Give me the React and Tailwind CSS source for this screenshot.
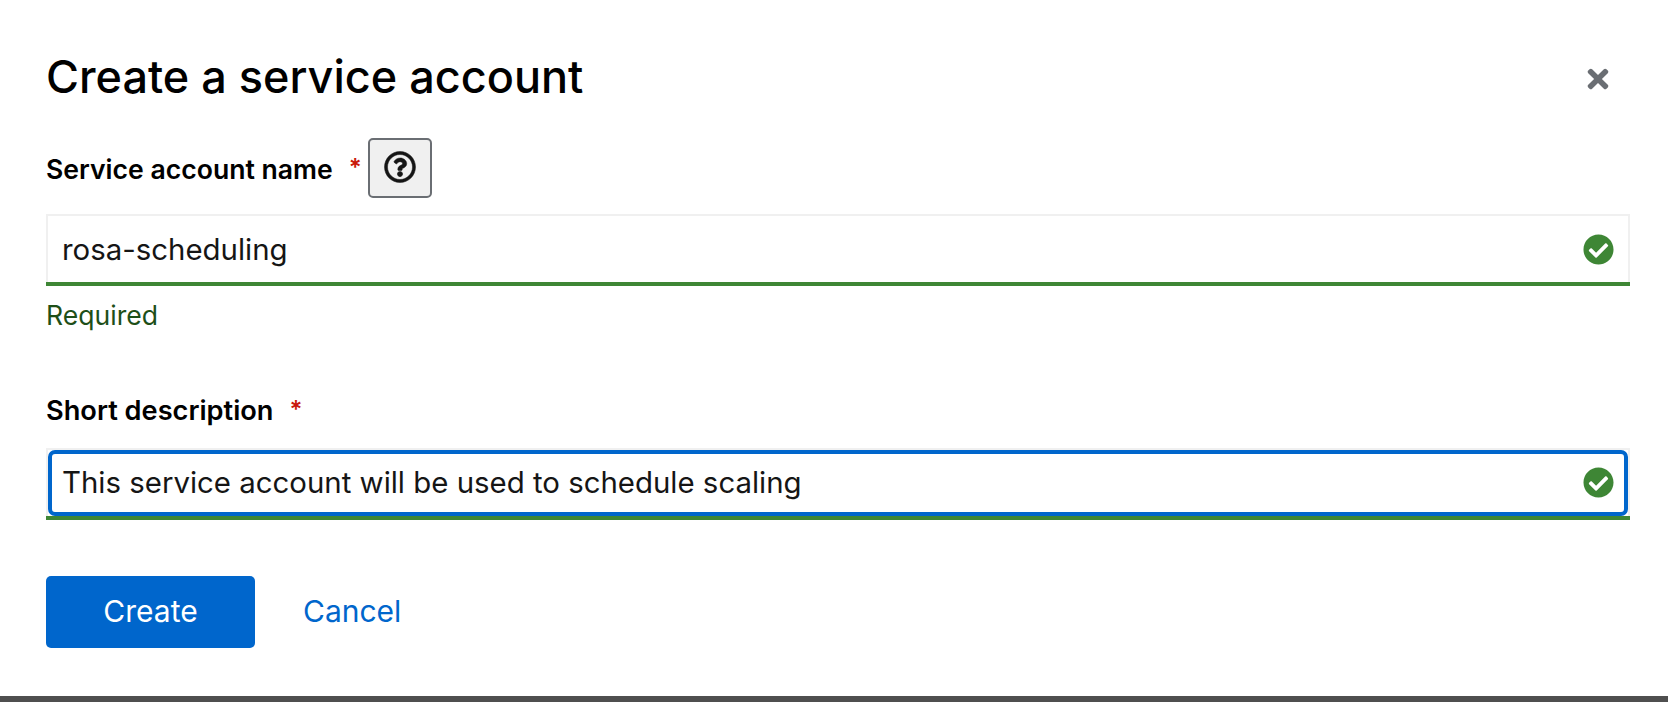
import React from "react";
import { FaCheckCircle, FaRegQuestionCircle, FaTimes } from "react-icons/fa";

function Field({ value, focused }) {
  return (
    <div className="h-[72px] w-full flex flex-col">
      <div className="relative flex-1 border-2 border-b-0 border-[#f0f0f0] flex items-center pl-[14px] pr-[14px]">
        {focused && <div className="absolute inset-0 border-4 border-[#06c] rounded-[7px]" />}
        <span className="flex-1 text-[29.4px] leading-none text-[#151515] whitespace-nowrap pt-[1px]">{value}</span>
        <FaCheckCircle className="w-[31px] h-[31px] text-[#3e8635]" />
      </div>
      <div className="h-[4px] bg-[#3e8635]" />
    </div>
  );
}

function Req() {
  return <span className="text-[#c9190b] text-[24px] font-semibold ml-[16px] leading-none -mt-[1px]">*</span>;
}

export default function App() {
  return (
    <div className="w-[1668px] h-[702px] flex flex-col bg-white font-['Inter','Liberation_Sans',sans-serif] overflow-hidden">
      <div className="flex-1 pl-[46px] pr-[38px] pt-[40px]">
        <div className="flex items-center justify-between h-[72px]">
          <h1 className="text-[45px] font-medium leading-none text-black">Create a service account</h1>
          <button className="w-[64px] h-[72px] flex items-center justify-center text-[#6a6e73] pt-[6px]">
            <FaTimes className="w-[30px] h-[30px]" />
          </button>
        </div>
        <div className="flex items-center h-[60px] mt-[26px]">
          <span className="text-[26.6px] font-semibold text-black leading-none pt-[2px]">Service account name</span>
          <Req />
          <button className="ml-[6px] w-[64px] h-[60px] flex items-center justify-center bg-[#f0f0f0] border-2 border-[#6a6e73] rounded-[5px] pb-[3px]">
            <FaRegQuestionCircle className="w-[32px] h-[32px] text-[#151515]" stroke="currentColor" strokeWidth="8" />
          </button>
        </div>
        <div className="mt-[16px]">
          <Field value="rosa-scheduling" />
        </div>
        <div className="mt-[16px] text-[26.6px] leading-none text-[#1e4f18]">Required</div>
        <div className="flex items-center h-[36px] mt-[64px]">
          <span className="text-[27.2px] font-semibold text-black leading-none">Short description</span>
          <Req />
        </div>
        <div className="mt-[19px]">
          <Field value="This service account will be used to schedule scaling" focused />
        </div>
        <div className="flex items-center mt-[56px]">
          <button className="w-[209px] h-[72px] bg-[#06c] text-white text-[30px] rounded-[5px]">Create</button>
          <button className="ml-[48px] text-[#06c] text-[30px]">Cancel</button>
        </div>
      </div>
      <div className="h-[6px] bg-[#4f4f4f]" />
    </div>
  );
}
